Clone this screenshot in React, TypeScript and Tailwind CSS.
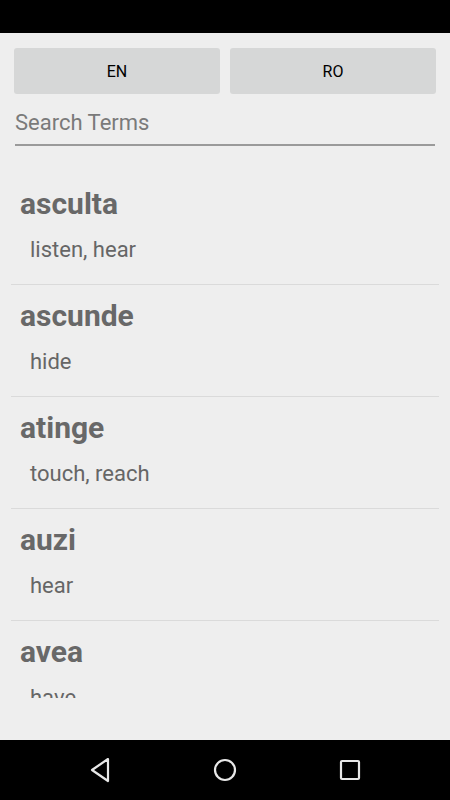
import React from "react";

const TERMS = [
  { term: "asculta", meaning: "listen, hear" },
  { term: "ascunde", meaning: "hide" },
  { term: "atinge", meaning: "touch, reach" },
  { term: "auzi", meaning: "hear" },
  { term: "avea", meaning: "have" },
];

function NavBar() {
  return (
    <div className="h-[60px] bg-black flex items-center justify-center">
      <div className="w-[125px] flex justify-center">
        <svg width="24" height="26" viewBox="0 0 24 26" fill="none">
          <path d="M20 2 L4 13 L20 24 Z" stroke="#e8e8e8" strokeWidth="2.2" strokeLinejoin="round" />
        </svg>
      </div>
      <div className="w-[125px] flex justify-center">
        <svg width="24" height="24" viewBox="0 0 24 24" fill="none">
          <circle cx="12" cy="12" r="10" stroke="#e8e8e8" strokeWidth="2.2" />
        </svg>
      </div>
      <div className="w-[125px] flex justify-center">
        <svg width="22" height="22" viewBox="0 0 22 22" fill="none">
          <rect x="2" y="2" width="18" height="18" rx="1" stroke="#e8e8e8" strokeWidth="2.2" />
        </svg>
      </div>
    </div>
  );
}

export default function App() {
  return (
    <div className="w-[450px] h-[800px] flex flex-col bg-[#eeeeee] font-['Roboto',sans-serif] overflow-hidden">
      <div className="h-[33px] bg-black" />

      <div className="flex-1 flex flex-col min-h-0">
        {/* language buttons */}
        <div className="flex gap-[10px] px-[14px] pt-[15px]">
          <button className="flex-1 h-[46px] pt-[2px] rounded-[3px] bg-[#d6d7d7] text-[16px] text-black">
            EN
          </button>
          <button className="flex-1 h-[46px] pt-[2px] rounded-[3px] bg-[#d6d7d7] text-[16px] text-black">
            RO
          </button>
        </div>

        {/* search */}
        <div className="mx-[15px] mt-[10px] h-[42px] flex items-center pb-[4px] border-b-2 border-[#9a9a9a]">
          <input
            placeholder="Search Terms"
            className="w-full bg-transparent text-[22px] text-[#333] placeholder-[#7a7a7a] outline-none"
          />
        </div>

        {/* term list */}
        <div className="mt-[27px] h-[525px] overflow-hidden">
          {TERMS.map((t) => (
            <div key={t.term} className="mx-[11px] border-b border-[#dadada] pt-[14px] pb-[21px]">
              <div className="pl-[9px] text-[30px] leading-[34px] font-bold text-[#686868]">{t.term}</div>
              <div className="mt-[16px] pl-[19px] text-[22px] leading-[26px] text-[#666666]">{t.meaning}</div>
            </div>
          ))}
        </div>
      </div>

      <NavBar />
    </div>
  );
}
